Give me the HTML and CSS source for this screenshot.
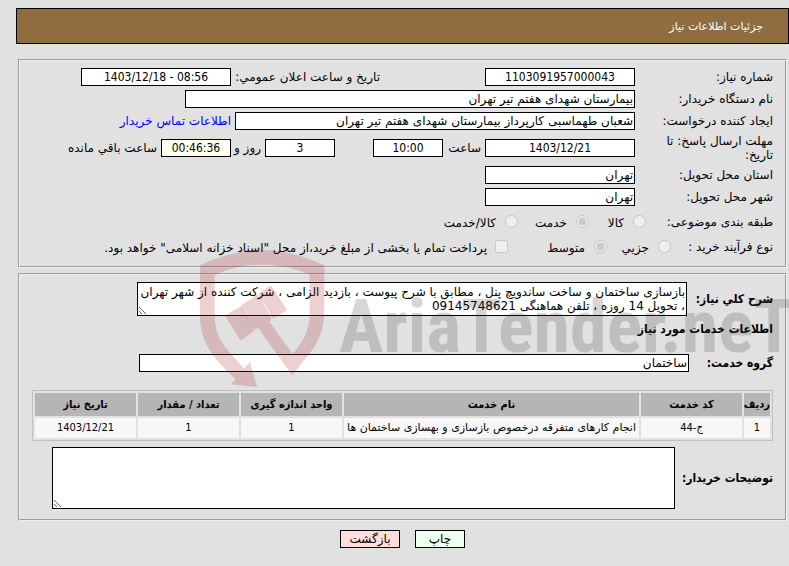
FILE: index.html
```html
<!DOCTYPE html>
<html lang="fa" dir="rtl">
<head>
<meta charset="utf-8">
<title>جزئیات اطلاعات نیاز</title>
<link rel="stylesheet" href="styles.css">
</head>
<body>
<header class="titlebar"><h1>جزئیات اطلاعات نیاز</h1></header>
<main class="content">
  <form>
    <fieldset class="panel">
      <div class="row">
        <label class="name" for="number">شماره نیاز:</label>
        <input class="box medium center" id="number" value="1103091957000043" readonly>
        <label class="announce" for="announced">تاریخ و ساعت اعلان عمومي:</label>
        <input class="box medium center" id="announced" dir="ltr" value="1403/12/18 - 08:56" readonly>
      </div>
      <div class="row">
        <label class="name" for="org">نام دستگاه خریدار:</label>
        <input class="box long" id="org" value="بیمارستان شهدای هفتم تیر تهران" readonly>
      </div>
      <div class="row">
        <label class="name" for="creator">ایجاد کننده درخواست:</label>
        <input class="box creator" id="creator" value="شعبان طهماسبی کارپرداز بیمارستان شهدای هفتم تیر تهران" readonly>
        <a class="contact" href="#contact">اطلاعات تماس خریدار</a>
      </div>
      <div class="row deadline">
        <label class="name" for="due">مهلت ارسال پاسخ: تا تاریخ:</label>
        <input class="box medium center" id="due" value="1403/12/21" readonly>
        <label class="hour" for="due-time">ساعت</label>
        <input class="box short center" id="due-time" value="10:00" readonly>
        <input class="box short center days" id="days" value="3" readonly>
        <label class="day-label" for="days">روز و</label>
        <input class="box short center timer" id="left" value="00:46:36" readonly>
        <label class="remaining" for="left">ساعت باقي مانده</label>
      </div>
      <div class="row">
        <label class="name" for="province">استان محل تحویل:</label>
        <input class="box medium" id="province" value="تهران" readonly>
      </div>
      <div class="row">
        <label class="name" for="city">شهر محل تحویل:</label>
        <input class="box medium" id="city" value="تهران" readonly>
      </div>
      <div class="row choices">
        <span class="name kind">طبقه بندی موضوعی:</span>
        <label class="option goods"><input type="radio" name="kind" disabled>کالا</label>
        <label class="option service"><input type="radio" name="kind" checked disabled>خدمت</label>
        <label class="option"><input type="radio" name="kind" disabled>کالا/خدمت</label>
      </div>
      <div class="row choices">
        <span class="name process">نوع فرآیند خرید :</span>
        <label class="option minor"><input type="radio" name="process" disabled>جزیي</label>
        <label class="option average"><input type="radio" name="process" checked disabled>متوسط</label>
        <label class="option treasury"><input type="checkbox" disabled>پرداخت تمام یا بخشی از مبلغ خرید،از محل "اسناد خزانه اسلامی" خواهد بود.</label>
      </div>
    </fieldset>

    <fieldset class="panel services">
      <div class="row">
        <label class="strong" for="summary">شرح کلي نیاز:</label>
        <textarea class="area summary" id="summary" readonly>بازسازی ساختمان و ساخت ساندویچ پنل ، مطابق با شرح پیوست ، بازدید الزامی ، شرکت کننده از شهر تهران
، تحویل 14 روزه ، تلفن هماهنگی 09145748621</textarea>
      </div>
      <h2 class="strong heading">اطلاعات خدمات مورد نیاز</h2>
      <div class="row">
        <label class="strong group" for="group">گروه خدمت:</label>
        <input class="box group-box" id="group" value="ساختمان" readonly>
      </div>
      <table class="items">
        <thead>
          <tr><th class="c-row">ردیف</th><th class="c-code">کد خدمت</th><th>نام خدمت</th><th class="c-code">واحد اندازه گیری</th><th class="c-code">تعداد / مقدار</th><th class="c-code">تاریخ نیاز</th></tr>
        </thead>
        <tbody>
          <tr><td>1</td><td>ج-44</td><td class="title">انجام کارهای متفرقه درخصوص بازسازی و بهسازی ساختمان ها</td><td>1</td><td>1</td><td>1403/12/21</td></tr>
        </tbody>
      </table>
      <div class="row">
        <label class="strong notes-label" for="notes">توضیحات خریدار:</label>
        <textarea class="area notes" id="notes" readonly></textarea>
      </div>
    </fieldset>

    <div class="actions">
      <button class="button print" type="button">چاپ</button>
      <button class="button back" type="button">بازگشت</button>
    </div>
  </form>
</main>
<svg class="watermark" viewBox="0 0 599 150" direction="ltr">
  <g class="shield" transform="scale(.33333)">
    <path d="M30 76C85 50 150 30 216 30S345 48 403 76V205C403 260 392 295 365 332L307 406L204 263C196 270 190 268 184 259L153 209C149 202 151 198 157 194L197 167C204 163 208 165 212 172L242 232C245 239 243 243 239 246L308 342C342 302 358 270 359 218V104C315 84 270 74 216 74S117 85 74 106V220C74 286 99 316 132 352L163 386L180 365L201 441L122 433L137 417C100 385 61 342 43 300C33 276 30 252 30 220Z"/>
    <path d="M109 224L145 203Q150 201 153 206L193 272L155 300Q152 301 149 297L107 231Q106 227 109 224Z"/>
    <path d="M206 161L238 139Q242 136 245 140L289 206Q291 210 287 213L249 236Z"/>
  </g>
  <text class="wordmark" x="149" y="112">AriaTender.neT</text>
</svg>
</body>
</html>
```
FILE: styles.css
```css
* {
  box-sizing: border-box;
}

body {
  margin: 0;
  position: relative;
  overflow-x: hidden;
  background: #e1e1e1;
  color: #000;
  font: 12px/14px "DejaVu Sans", sans-serif;
}

input, textarea, button {
  font: inherit;
  color: inherit;
}

.titlebar {
  margin: 8px 0 0 16px;
  height: 36px;
  padding: 2px 25px 0;
  display: flex;
  align-items: center;
  border: 1px solid #000;
  background: #8f6d40;
  color: #fff;
}

h1, h2 {
  margin: 0;
  font-size: 12px;
}

h1 {
  font-size: 11px;
  font-weight: normal;
}

.content {
  margin: 15px 2px 0 18px;
}

.panel {
  margin: 0;
  min-width: 0;
  padding: 7px 12px 0;
  height: 209px;
  border: 2px groove #f0f0f0;
  display: flex;
  flex-direction: column;
  gap: 4px;
}

.row {
  display: flex;
  align-items: center;
  white-space: nowrap;
}

.name {
  width: 138px;
  padding-left: 24px;
  flex: none;
}

.box {
  height: 18px;
  padding: 0 1px;
  border: 1px solid #000;
  border-radius: 0;
  background: #fff;
  flex: none;
}

.center, .strong, .items {
  font-family: "DejaVu Sans Condensed", "DejaVu Sans", sans-serif;
}

.center {
  text-align: center;
}

.medium {
  width: 150px;
}

.long {
  width: 450px;
}

.creator {
  width: 400px;
}

.short {
  width: 70px;
}

.announce {
  width: 149px;
  margin-right: 105px;
}

.contact {
  margin-right: 4px;
  color: #00f;
  text-decoration: none;
}

.deadline {
  height: 28px;
}

.deadline .name {
  white-space: normal;
}

.hour {
  width: 42px;
  padding-right: 4px;
}

.days {
  margin-right: 38px;
}

.day-label {
  width: 34px;
  padding-right: 4px;
}

.timer {
  background: #fffff0;
}

.remaining {
  padding-right: 4px;
}

.choices {
  height: 21px;
  padding-top: 3px;
  align-items: flex-start;
  line-height: 18px;
}

.option {
  display: flex;
  align-items: flex-start;
  gap: 9px;
  line-height: 21px;
}

.option input {
  margin: 2px 0 0;
  flex: none;
}

.kind {
  width: 127px;
  padding: 0;
}

.process {
  width: 102px;
  padding: 0;
}

.goods {
  width: 57px;
}

.service {
  width: 71px;
}

.minor {
  width: 64px;
}

.average {
  width: 99px;
}

.treasury {
  gap: 8px;
}

.services {
  margin-top: 5px;
  height: 248px;
  gap: 6px;
}

.strong {
  font-weight: bold;
}

.services .row .strong {
  width: 86px;
  flex: none;
}

.services .row .group {
  width: 84px;
}

.services .row .notes-label {
  width: 98px;
}

.area {
  display: block;
  margin: 0;
  padding: 2px 1px;
  border: 1px solid #000;
  border-radius: 0;
  background: #fff;
  overflow: hidden;
  resize: both;
}

.summary {
  width: 550px;
  height: 34px;
  white-space: pre;
}

.notes {
  width: 623px;
  height: 62px;
}

.heading {
  padding-bottom: 12px;
}

.group-box {
  width: 550px;
}

.items {
  width: 100%;
  margin-top: 12px;
  border: 1px solid #bfbfbf;
  border-spacing: 2px;
  table-layout: fixed;
  font-size: 11px;
  text-align: center;
}

.items th {
  height: 23px;
  padding: 0;
  background: #b5b5b5;
}

.items td {
  height: 20px;
  padding: 0;
  background: #f7f7f7;
  white-space: nowrap;
}

.items .title {
  font-family: "DejaVu Sans", sans-serif;
}

.items .c-row {
  width: 26px;
}

.items .c-code {
  width: 101px;
}

.actions {
  display: flex;
  justify-content: center;
  gap: 15px;
  margin: 9px 0 0;
}

.button {
  height: 18px;
  padding: 0;
  border: 1px solid #000;
}

.print {
  width: 50px;
  background: #efe;
}

.back {
  width: 60px;
  background: #fdd;
}

.watermark {
  position: absolute;
  top: 240px;
  right: 0;
  width: 599px;
  height: 150px;
  pointer-events: none;
}

.shield {
  fill: rgba(165, 20, 30, .2);
}

.wordmark {
  fill: rgba(50, 50, 50, .2);
  font: bold 74px "Liberation Sans Narrow", "Roboto Condensed", "Liberation Sans", sans-serif;
}
```
